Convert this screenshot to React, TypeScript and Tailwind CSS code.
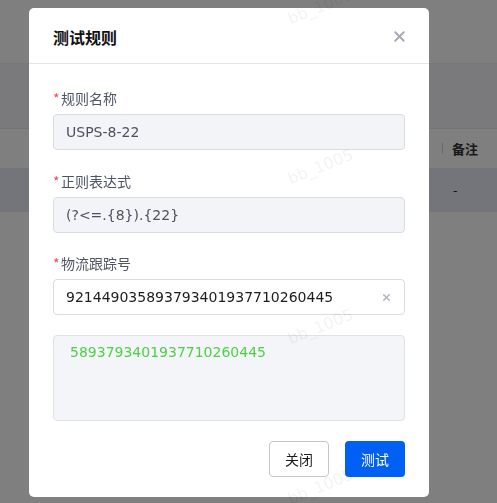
import { X } from "lucide-react"

const cjk = "font-['Noto_Sans_CJK_SC','Noto_Sans',sans-serif]"
const mono = "font-['DejaVu_Sans','Noto_Sans_CJK_SC',sans-serif]"

function Label({ text }: { text: string }) {
  return (
    <div className={`flex items-center h-5 text-[14px] text-[#4e5566] ${cjk}`}>
      <span className="text-[#f5455c] w-[8px] text-[14px]">*</span>
      <span>{text}</span>
    </div>
  )
}

export default function App() {
  const marks = [6, 166, 326, 486]

  return (
    <div className={`relative w-[497px] h-[503px] overflow-hidden bg-white ${cjk}`}>
      {/* page underneath the dialog */}
      <div className="flex flex-col">
        <div className="h-16 border-b border-[#eef0f4] bg-white" />
        <div className="h-[65px] bg-[#f4f5f8] border-b border-[#e4e6eb]" />
        <div className="h-[39px] bg-white flex items-center justify-end pr-[19px]">
          <span className="w-px h-[11px] bg-[#cfd2d8] mr-[9px]" />
          <span className="text-[13px] font-bold text-[#333]">备注</span>
        </div>
        <div className="h-[44px] bg-[#e7ebf7] flex items-center pl-[453px] text-[13px] text-[#222]">-</div>
      </div>

      <div className="fixed inset-0 bg-black/50" />

      <div className="absolute left-[29px] top-2 w-[400px] rounded-[5px] bg-white flex flex-col">
        <div className="h-14 px-6 flex items-center justify-between border-b border-[#e3e5ea]">
          <span className="text-[16px] font-bold text-[#111] pt-[2px]">测试规则</span>
          <X className="w-[17px] h-[17px] text-[#a3a8b2] mr-[-3px] mt-[2px]" strokeWidth={2.6} />
        </div>

        <div className="px-6 pt-6 pb-5 flex flex-col">
          <Label text="规则名称" />
          <div className={`mt-[6px] h-9 rounded-[4px] border border-[#d9dce2] bg-[#f3f4f8] flex items-center px-3 text-[14px] text-[#4c5260] ${mono}`}>
            USPS-8-22
          </div>

          <div className="mt-[21px]">
            <Label text="正则表达式" />
          </div>
          <div className={`mt-[6px] h-9 rounded-[4px] border border-[#d9dce2] bg-[#f3f4f8] flex items-center px-3 text-[14px] text-[#4c5260] ${mono}`}>
            {"(?<=.{8}).{22}"}
          </div>

          <div className="mt-5">
            <Label text="物流跟踪号" />
          </div>
          <div className={`mt-[6px] h-9 rounded-[4px] border border-[#d9dce2] bg-white flex items-center justify-between pl-3 pr-[12px] text-[14px] text-[#1c1c1c] ${mono}`}>
            <span>921449035893793401937710260445</span>
            <X className="w-[11px] h-[11px] text-[#aeb3bd]" strokeWidth={3} />
          </div>

          <div className={`mt-5 h-[86px] rounded-[4px] border border-[#dfe2e8] bg-[#f4f5f9] px-4 pt-[6px] text-[14px] text-[#4fcf45] ${mono}`}>
            5893793401937710260445
          </div>

          <div className="mt-5 flex justify-end gap-4">
            <button className="w-[60px] h-9 rounded-[4px] border border-[#c3c6cc] bg-white text-[14px] text-[#1a1a1a]">关闭</button>
            <button className="w-[60px] h-9 rounded-[4px] bg-[#0060f4] text-[14px] text-white">测试</button>
          </div>
        </div>
      </div>

      {/* watermark layer */}
      {marks.map((y) => (
        <span
          key={y}
          className={`absolute left-[286px] pointer-events-none text-[16px] text-black/[0.05] -rotate-[22deg] ${mono}`}
          style={{ top: y - 11 }}
        >
          bb_1005
        </span>
      ))}
    </div>
  )
}
